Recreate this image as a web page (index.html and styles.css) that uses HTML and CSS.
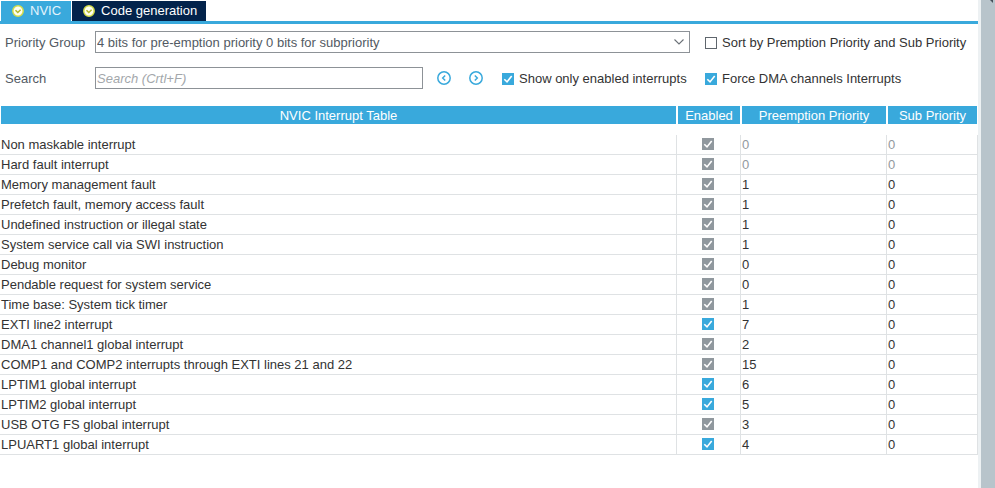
FILE: index.html
```
<!doctype html>
<html lang="en">
<head>
    <meta charset="utf-8">
    <title>NVIC Configuration</title>
    <link rel="stylesheet" href="styles.css">
</head>
<body>
<main class="panel">
    <nav class="tabs">
        <button class="tab active" type="button">
            <svg class="tab-icon" viewBox="0 0 12 12"><circle cx="6" cy="6" r="5.2" fill="#fffff0" stroke="#d3dc4a" stroke-width="1.5"/><path d="M3.500 5.200l2.300 2.300L8.600 4.700" fill="none" stroke="#b4b82c" stroke-width="1.5"/></svg>
            NVIC
        </button>
        <button class="tab" type="button">
            <svg class="tab-icon" viewBox="0 0 12 12"><circle cx="6" cy="6" r="5.2" fill="#fffff0" stroke="#d3dc4a" stroke-width="1.5"/><path d="M3.500 5.200l2.300 2.300L8.600 4.700" fill="none" stroke="#b4b82c" stroke-width="1.5"/></svg>
            Code generation
        </button>
    </nav>
    <form class="options">
        <label for="group">Priority Group</label>
        <div class="select">
            <select id="group">
                <option>4 bits for pre-emption priority 0 bits for subpriority</option>
            </select>
            <svg class="arrow" viewBox="0 0 10 6"><path d="M.5.5L5 5 9.500.5" fill="none" stroke="#6b7177" stroke-width="1.1"/></svg>
        </div>
        <label class="check"><input type="checkbox">Sort by Premption Priority and Sub Priority</label>

        <label for="search">Search</label>
        <div class="search">
            <input class="search-text" id="search" type="text" placeholder="Search (Crtl+F)">
            <button class="step" type="button" aria-label="Previous"><svg viewBox="0 0 14 14"><circle cx="7" cy="7" r="6.200"/><path d="M8.200 4.500L5.700 7l2.500 2.500"/></svg></button>
            <button class="step" type="button" aria-label="Next"><svg viewBox="0 0 14 14"><circle cx="7" cy="7" r="6.200"/><path d="M5.800 4.500L8.300 7 5.800 9.500"/></svg></button>
            <label class="check"><input type="checkbox" checked>Show only enabled interrupts</label>
        </div>
        <label class="check"><input type="checkbox" checked>Force DMA channels Interrupts</label>
    </form>
    <table class="interrupts">
        <colgroup>
            <col>
            <col class="col-enabled">
            <col class="col-preemption">
            <col class="col-sub">
        </colgroup>
        <thead>
            <tr><th>NVIC Interrupt Table</th><th>Enabled</th><th>Preemption Priority</th><th>Sub Priority</th></tr>
        </thead>
        <tbody>
            <tr class="spacer"><td colspan="4"></td></tr>
            <tr class="fixed"><td>Non maskable interrupt</td><td><input type="checkbox" aria-label="Non maskable interrupt" checked disabled></td><td>0</td><td>0</td></tr>
            <tr class="fixed"><td>Hard fault interrupt</td><td><input type="checkbox" aria-label="Hard fault interrupt" checked disabled></td><td>0</td><td>0</td></tr>
            <tr><td>Memory management fault</td><td><input type="checkbox" aria-label="Memory management fault" checked disabled></td><td>1</td><td>0</td></tr>
            <tr><td>Prefetch fault, memory access fault</td><td><input type="checkbox" aria-label="Prefetch fault, memory access fault" checked disabled></td><td>1</td><td>0</td></tr>
            <tr><td>Undefined instruction or illegal state</td><td><input type="checkbox" aria-label="Undefined instruction or illegal state" checked disabled></td><td>1</td><td>0</td></tr>
            <tr><td>System service call via SWI instruction</td><td><input type="checkbox" aria-label="System service call via SWI instruction" checked disabled></td><td>1</td><td>0</td></tr>
            <tr><td>Debug monitor</td><td><input type="checkbox" aria-label="Debug monitor" checked disabled></td><td>0</td><td>0</td></tr>
            <tr><td>Pendable request for system service</td><td><input type="checkbox" aria-label="Pendable request for system service" checked disabled></td><td>0</td><td>0</td></tr>
            <tr><td>Time base: System tick timer</td><td><input type="checkbox" aria-label="Time base: System tick timer" checked disabled></td><td>1</td><td>0</td></tr>
            <tr><td>EXTI line2 interrupt</td><td><input type="checkbox" aria-label="EXTI line2 interrupt" checked></td><td>7</td><td>0</td></tr>
            <tr><td>DMA1 channel1 global interrupt</td><td><input type="checkbox" aria-label="DMA1 channel1 global interrupt" checked disabled></td><td>2</td><td>0</td></tr>
            <tr><td>COMP1 and COMP2 interrupts through EXTI lines 21 and 22</td><td><input type="checkbox" aria-label="COMP1 and COMP2 interrupts" checked disabled></td><td>15</td><td>0</td></tr>
            <tr><td>LPTIM1 global interrupt</td><td><input type="checkbox" aria-label="LPTIM1 global interrupt" checked></td><td>6</td><td>0</td></tr>
            <tr><td>LPTIM2 global interrupt</td><td><input type="checkbox" aria-label="LPTIM2 global interrupt" checked></td><td>5</td><td>0</td></tr>
            <tr><td>USB OTG FS global interrupt</td><td><input type="checkbox" aria-label="USB OTG FS global interrupt" checked disabled></td><td>3</td><td>0</td></tr>
            <tr><td>LPUART1 global interrupt</td><td><input type="checkbox" aria-label="LPUART1 global interrupt" checked></td><td>4</td><td>0</td></tr>
        </tbody>
    </table>
</main>
<aside class="divider">
    <svg class="divider-arrow" viewBox="0 0 4 3"><path d="M0 0h3v3z" fill="#46505a"/></svg>
</aside>
</body>
</html>
```
FILE: styles.css
```
* {
    box-sizing: border-box;
}
body {
    display: flex;
    min-height: 100vh;
    margin: 0;
    font-family: "Liberation Sans", Arial, sans-serif;
    font-size: 13px;
    line-height: 18px;
    color: #333;
    background: #fff;
}
button, input, select {
    margin: 0;
    font: inherit;
}
.panel {
    flex: 1;
    min-width: 0;
    border-right: 3px solid #edf1f3;
}

/* tabs */
.tabs {
    display: flex;
    gap: 1px;
    padding: 1px 1px 0;
    border-bottom: 3px solid #39a9dc;
}
.tab {
    display: flex;
    align-items: center;
    gap: 6px;
    height: 20px;
    padding: 0 9px 0 11px;
    border: 0;
    color: #fff;
    background: #03234b;
}
.tab.active {
    padding-right: 10px;
    color: #e4f4fc;
    background: #39a9dc;
}
.tab-icon {
    width: 12px;
    height: 12px;
}

/* options */
.options {
    display: grid;
    grid-template-columns: 75px 1fr 273px;
    gap: 14px 15px;
    align-items: center;
    padding: 7px 0 17px 5px;
    color: #525a63;
    white-space: nowrap;
}
.options > label,
.search .check {
    padding-top: 1px;
}
.select {
    position: relative;
}
.select select {
    display: block;
    width: 100%;
    height: 22px;
    padding: 1px 20px 0 1px;
    border: 1px solid #8d9297;
    border-radius: 0;
    color: #525a63;
    background: #fff;
    appearance: none;
}
.arrow {
    position: absolute;
    top: 8px;
    right: 6px;
    width: 10px;
    height: 6px;
    pointer-events: none;
}
.search {
    display: flex;
    align-items: center;
}
.search-text {
    flex: 1;
    min-width: 0;
    height: 22px;
    padding: 1px 1px 0;
    border: 1px solid #8d9297;
}
.search-text::placeholder {
    color: #a3a7ab;
    font-style: italic;
}
.step {
    width: 14px;
    height: 14px;
    margin-left: 14px;
    margin-right: 4px;
    padding: 0;
    border: 0;
    background: none;
}
.step svg {
    display: block;
    fill: none;
    stroke: #39a9dc;
    stroke-width: 1.5;
}
.search .check {
    width: 188px;
    margin-left: 15px;
}
.check {
    display: flex;
    align-items: center;
    gap: 5px;
    color: #333;
}
input[type=checkbox] {
    width: 12px;
    height: 12px;
    border: 1px solid #5f666d;
    background: #fff;
    appearance: none;
}
input[type=checkbox]:checked {
    border: 0;
    background: #39a9dc url("data:image/svg+xml,%3Csvg xmlns='http://www.w3.org/2000/svg' viewBox='0 0 12 12'%3E%3Cpath d='M2.300 6.200l2.700 2.700 4.700-5.900' fill='none' stroke='white' stroke-width='1.600'/%3E%3C/svg%3E");
}
input[type=checkbox]:checked:disabled {
    background-color: #90989e;
}

/* interrupt table */
.interrupts {
    width: 100%;
    table-layout: fixed;
    border-spacing: 0;
}
.col-enabled {
    width: 64px;
}
.col-preemption {
    width: 146px;
}
.col-sub {
    width: 91px;
}
.interrupts th {
    height: 18px;
    padding: 1px 0 0;
    border: solid #fff;
    border-width: 0 1px;
    font-weight: normal;
    line-height: 17px;
    color: #fff;
    background: #39a9dc;
}
.interrupts td {
    height: 20px;
    padding: 1px 1px 0;
    border: solid #dfe2e4;
    border-width: 0 1px 1px 0;
}
.interrupts td:nth-child(2) {
    padding: 0 1px 1px 0;
}
.interrupts td input {
    display: block;
    margin: 0 auto;
}
.interrupts .spacer td {
    height: 11px;
    padding: 0;
    border: 0;
}
.fixed td:nth-child(n+3) {
    color: #92999e;
}

.divider {
    width: 14px;
    background: #b8c4cb;
}
.divider-arrow {
    display: block;
    width: 4px;
    height: 3px;
    margin-left: auto;
    margin-right: 1px;
}
```
